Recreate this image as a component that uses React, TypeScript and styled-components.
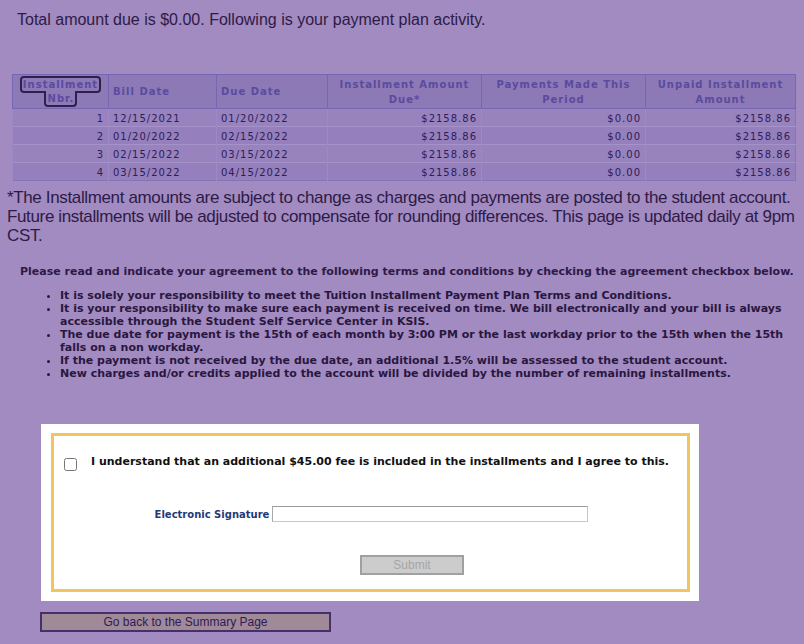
import React, { useState } from "react";
import styled, { createGlobalStyle } from "styled-components";

const GlobalStyle = createGlobalStyle`
  html, body {
    margin: 0;
    padding: 0;
    background: #a18bc1;
  }
  body {
    font-family: "Liberation Sans", Arial, sans-serif;
  }
`;

const Page = styled.div`
  width: 804px;
  height: 644px;
  overflow: hidden;
  padding: 0 9px 0 7px;
  box-sizing: border-box;
  background: #a18bc1;
`;

const Title = styled.p`
  margin: 0;
  padding: 11px 0 0 10px;
  font-size: 16px;
  line-height: 18px;
  color: #2e1a47;
`;

const Grid = styled.table`
  margin: 45px 0 0 5px;
  width: 783px;
  border-collapse: collapse;
  table-layout: fixed;
  background: #9782bd;
  border: 1px solid #8474b8;
  font-family: "DejaVu Sans", Verdana, sans-serif;
  font-size: 10px;
  letter-spacing: 1px;
`;

const HeadCell = styled.th<{ $align?: string }>`
  height: 33px;
  padding: 0 4px;
  background: #8c79b6;
  border: 1px solid #7667b4;
  color: #5a4b9e;
  font-weight: bold;
  line-height: 15px;
  text-align: ${(p) => p.$align || "center"};
  vertical-align: middle;
`;

/* the sort link in the first header has keyboard focus: its ring hugs both lines */
const SortLink = styled.a`
  display: inline-flex;
  flex-direction: column;
  align-items: center;
  color: inherit;
  text-decoration: none;
`;

const SortTop = styled.span`
  display: block;
  padding: 0 1px;
  border: 2px solid #2f1f4d;
  border-radius: 4px;
  line-height: 13px;
`;

const SortBottom = styled.span`
  display: block;
  margin-top: -2px;
  padding: 2px 1px 0 2px;
  border: 2px solid #2f1f4d;
  border-top: none;
  border-radius: 0 0 4px 4px;
  background: #8c79b6;
  line-height: 12px;
`;

const Row = styled.tr<{ $alt?: boolean }>`
  background: ${(p) => (p.$alt ? "#957fbc" : "#9883be")};
`;

const Cell = styled.td<{ $align?: string }>`
  height: 15px;
  padding: 2px 4px 0;
  border-top: 1px solid #a592c9;
  border-left: 1px solid #9d8ac4;
  color: #2d2058;
  line-height: 14px;
  text-align: ${(p) => p.$align || "left"};
  white-space: nowrap;
`;

const Footnote = styled.p`
  margin: 7px 0 0 0;
  font-family: "Liberation Sans", Arial, sans-serif;
  font-size: 17px;
  letter-spacing: -0.36px;
  line-height: 19px;
  color: #2e1a47;
`;

const Terms = styled.div`
  margin-top: 20px;
  padding-left: 13px;
  font-family: "DejaVu Sans", Verdana, sans-serif;
  font-weight: bold;
  font-size: 11px;
  color: #2e1a47;
`;

const Intro = styled.p`
  margin: 0;
  line-height: 14px;
`;

const TermList = styled.ul`
  margin: 10px 0 0 0;
  padding-left: 40px;
  line-height: 13px;
  color: #2a1740;
`;

const Panel = styled.div`
  margin: 44px 0 0 34px;
  width: 658px;
  padding: 9px 9px 9px 10px;
  box-sizing: border-box;
  background: #ffffff;
`;

const GoldFrame = styled.div`
  border: 3px solid #f2c45c;
  padding: 19px 10px 14px 10px;
`;

const AgreeRow = styled.label`
  display: flex;
  align-items: flex-start;
  gap: 14px;
  font-family: "DejaVu Sans", Verdana, sans-serif;
  font-weight: bold;
  font-size: 11px;
  line-height: 14px;
  color: #111111;
`;

const Check = styled.input`
  margin: 0;
  width: 13px;
  height: 13px;
  flex: none;
  position: relative;
  top: 3px;
`;

const SignRow = styled.div`
  margin-top: 37px;
  display: flex;
  justify-content: center;
  align-items: center;
  gap: 3px;
  padding-left: 2px;
`;

const SignLabel = styled.span`
  font-family: "DejaVu Sans", Verdana, sans-serif;
  font-weight: bold;
  font-size: 10px;
  color: #1f3a78;
`;

const SignInput = styled.input`
  width: 316px;
  height: 16px;
  box-sizing: border-box;
  padding: 0 2px;
  border: 1px solid #c8c8c8;
  border-top-color: #9a9a9a;
  border-left-color: #a8a8a8;
  background: #fff;
  outline: none;
`;

const ButtonRow = styled.div`
  margin-top: 33px;
  padding-left: 296px;
`;

const SubmitButton = styled.button`
  width: 104px;
  height: 20px;
  box-sizing: border-box;
  padding: 0;
  border: 2px solid #a0a0a0;
  background: #cccccc;
  color: #a6a6a6;
  font-family: "Liberation Sans", Arial, sans-serif;
  font-size: 12px;
`;

const BackButton = styled.button`
  display: block;
  margin: 11px 0 0 33px;
  width: 291px;
  height: 20px;
  box-sizing: border-box;
  padding: 0;
  border: 2px solid #46306c;
  background: #a08a98;
  color: #2e1a55;
  font-family: "Liberation Sans", Arial, sans-serif;
  font-size: 12px;
  cursor: pointer;
`;

const plan = [
  { nbr: 1, bill: "12/15/2021", due: "01/20/2022", amount: "$2158.86", paid: "$0.00", unpaid: "$2158.86" },
  { nbr: 2, bill: "01/20/2022", due: "02/15/2022", amount: "$2158.86", paid: "$0.00", unpaid: "$2158.86" },
  { nbr: 3, bill: "02/15/2022", due: "03/15/2022", amount: "$2158.86", paid: "$0.00", unpaid: "$2158.86" },
  { nbr: 4, bill: "03/15/2022", due: "04/15/2022", amount: "$2158.86", paid: "$0.00", unpaid: "$2158.86" },
];

const terms = [
  "It is solely your responsibility to meet the Tuition Installment Payment Plan Terms and Conditions.",
  "It is your responsibility to make sure each payment is received on time. We bill electronically and your bill is always accessible through the Student Self Service Center in KSIS.",
  "The due date for payment is the 15th of each month by 3:00 PM or the last workday prior to the 15th when the 15th falls on a non workday.",
  "If the payment is not received by the due date, an additional 1.5% will be assessed to the student account.",
  "New charges and/or credits applied to the account will be divided by the number of remaining installments.",
];

function App() {
  const [agreed, setAgreed] = useState(false);
  const [signature, setSignature] = useState("");

  return (
    <Page>
      <GlobalStyle />
      <Title>Total amount due is $0.00. Following is your payment plan activity.</Title>

      <Grid>
        <colgroup>
          <col style={{ width: 96 }} />
          <col style={{ width: 108 }} />
          <col style={{ width: 111 }} />
          <col style={{ width: 154 }} />
          <col style={{ width: 164 }} />
          <col style={{ width: 150 }} />
        </colgroup>
        <thead>
          <tr>
            <HeadCell>
              <SortLink href="#">
                <SortTop>Installment</SortTop>
                <SortBottom>Nbr.</SortBottom>
              </SortLink>
            </HeadCell>
            <HeadCell $align="left">Bill Date</HeadCell>
            <HeadCell $align="left">Due Date</HeadCell>
            <HeadCell>Installment Amount Due*</HeadCell>
            <HeadCell>Payments Made This Period</HeadCell>
            <HeadCell>Unpaid Installment Amount</HeadCell>
          </tr>
        </thead>
        <tbody>
          {plan.map((p, i) => (
            <Row key={p.nbr} $alt={i % 2 === 1}>
              <Cell $align="right">{p.nbr}</Cell>
              <Cell>{p.bill}</Cell>
              <Cell>{p.due}</Cell>
              <Cell $align="right">{p.amount}</Cell>
              <Cell $align="right">{p.paid}</Cell>
              <Cell $align="right">{p.unpaid}</Cell>
            </Row>
          ))}
        </tbody>
      </Grid>

      <Footnote>
        *The Installment amounts are subject to change as charges and payments are posted to the student account.
        Future installments will be adjusted to compensate for rounding differences. This page is updated daily at 9pm
        CST.
      </Footnote>

      <Terms>
        <Intro>
          Please read and indicate your agreement to the following terms and conditions by checking the agreement
          checkbox below.
        </Intro>
        <TermList>
          {terms.map((t) => (
            <li key={t}>{t}</li>
          ))}
        </TermList>
      </Terms>

      <Panel>
        <GoldFrame>
          <AgreeRow>
            <Check type="checkbox" checked={agreed} onChange={(e) => setAgreed(e.target.checked)} />
            I understand that an additional $45.00 fee is included in the installments and I agree to this.
          </AgreeRow>
          <SignRow>
            <SignLabel>Electronic Signature</SignLabel>
            <SignInput value={signature} onChange={(e) => setSignature(e.target.value)} />
          </SignRow>
          <ButtonRow>
            <SubmitButton disabled={!agreed}>Submit</SubmitButton>
          </ButtonRow>
        </GoldFrame>
      </Panel>

      <BackButton>Go back to the Summary Page</BackButton>
    </Page>
  );
}

export default App;
